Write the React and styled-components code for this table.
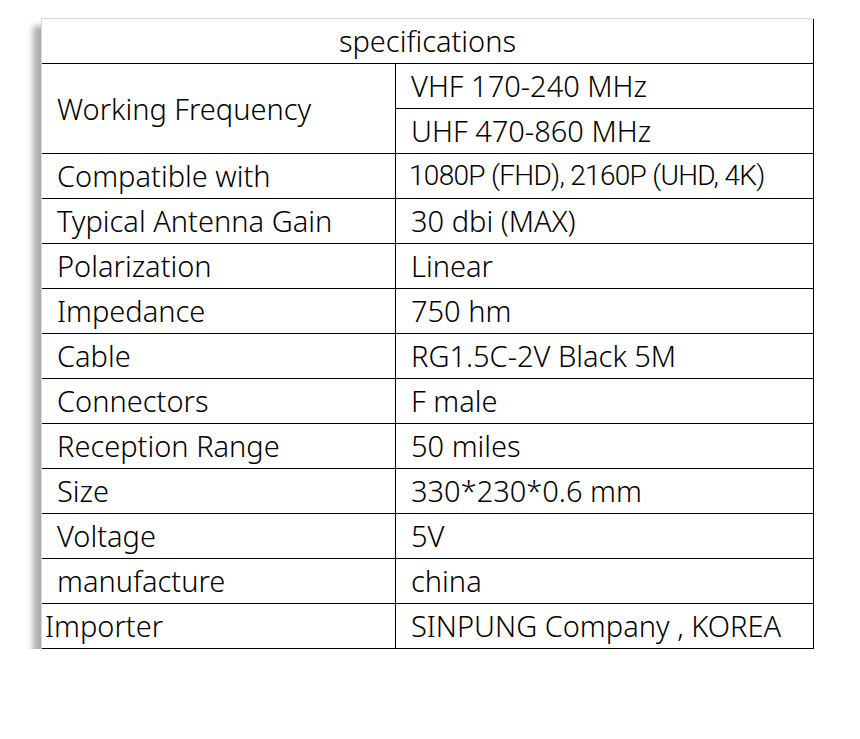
import styled, { createGlobalStyle } from "styled-components";

const GlobalStyle = createGlobalStyle`
  body {
    margin: 0;
    background: #fff;
    font-family: "Noto Sans", "Noto Sans CJK KR", sans-serif;
    color: #000;
  }
`;

const Page = styled.div`
  padding: 18px 0 0 41px;
`;

const SpecTable = styled.table`
  border-collapse: separate;
  border-spacing: 0;
  border-top: 1px solid #d8d8d8;
  border-left: 1px solid #d8d8d8;
  box-shadow: -8px 8px 6px rgba(0, 0, 0, 0.32);
  width: 773px;
  table-layout: fixed;
`;

const Cell = styled.td`
  height: 44px;
  padding: 0 0 0 ${(p) => p.$pad ?? 15}px;
  border-right: 1px solid #000;
  border-bottom: 1px solid #000;
  font-size: ${(p) => (p.$roboto ? 28 : 29)}px;
  line-height: 32px;
  white-space: nowrap;
  vertical-align: middle;
  text-align: ${(p) => (p.$center ? "center" : "left")};
  font-family: ${(p) =>
    p.$roboto
      ? `Roboto, "Noto Sans", sans-serif`
      : `"Noto Sans", "Noto Sans CJK KR", sans-serif`};
  font-weight: ${(p) => (p.$roboto ? 300 : 350)};
  letter-spacing: ${(p) => (p.$roboto ? "-0.7px" : "0")};
`;

const rows = [
  ["Compatible with", "1080P (FHD), 2160P (UHD, 4K)", true],
  ["Typical Antenna Gain", "30 dbi (MAX)"],
  ["Polarization", "Linear"],
  ["Impedance", "750 hm"],
  ["Cable", "RG1.5C-2V Black 5M"],
  ["Connectors", "F male"],
  ["Reception Range", "50 miles"],
  ["Size", "330*230*0.6 mm"],
  ["Voltage", "5V"],
  ["manufacture", "china"],
];

export default function App() {
  return (
    <>
      <GlobalStyle />
      <Page>
        <SpecTable>
          <colgroup>
            <col style={{ width: 354 }} />
            <col style={{ width: 418 }} />
          </colgroup>
          <tbody>
            <tr>
              <Cell colSpan={2} $center $pad={0}>
                specifications
              </Cell>
            </tr>
            <tr>
              <Cell rowSpan={2}>Working Frequency</Cell>
              <Cell>VHF 170-240 MHz</Cell>
            </tr>
            <tr>
              <Cell>UHF 470-860 MHz</Cell>
            </tr>
            {rows.map(([label, value, roboto]) => (
              <tr key={label}>
                <Cell>{label}</Cell>
                <Cell $roboto={roboto} $pad={roboto ? 13 : 15}>
                  {value}
                </Cell>
              </tr>
            ))}
            <tr>
              <Cell $pad={3}>Importer</Cell>
              <Cell>SINPUNG Company , KOREA</Cell>
            </tr>
          </tbody>
        </SpecTable>
      </Page>
    </>
  );
}
